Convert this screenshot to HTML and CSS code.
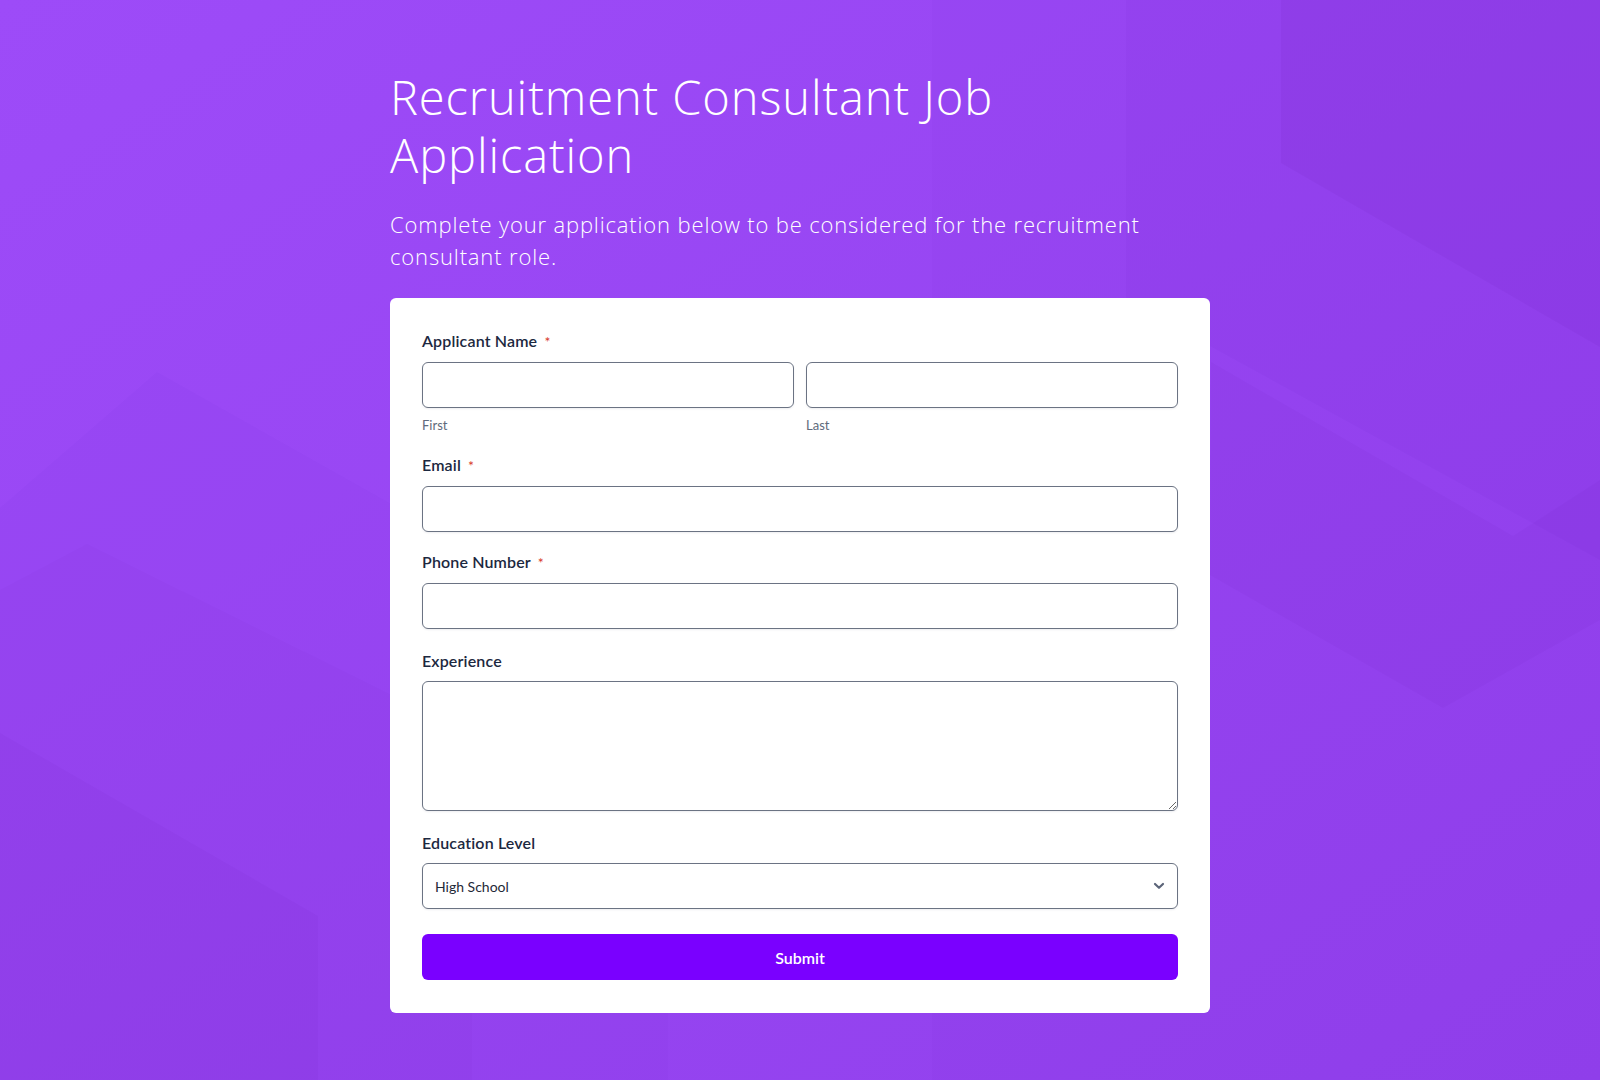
FILE: index.html
```html
<!DOCTYPE html>
<html lang="en">
<head>
<meta charset="utf-8">
<title>Recruitment Consultant Job Application</title>
<link rel="stylesheet" href="styles.css">
</head>
<body>
<svg class="bg" width="1600" height="1080" viewBox="0 0 1600 1080" preserveAspectRatio="none" aria-hidden="true">
  <defs>
    <linearGradient id="g" x1="0" y1="0" x2="1" y2="1">
      <stop offset="0" stop-color="#9d4bf8"/>
      <stop offset="1" stop-color="#9140ec"/>
    </linearGradient>
  </defs>
  <rect width="1600" height="1080" fill="url(#g)"/>
  <g fill="#4a0090">
    <polygon points="932,0 1600,0 1600,1080 932,1080" opacity="0.02"/>
    <polygon points="1126,0 1600,0 1600,560 1126,300" opacity="0.03"/>
    <polygon points="1281,0 1600,0 1600,347 1281,163" opacity="0.05"/>
    <polygon points="1211,362 1513,536 1600,480 1600,620 1443,708 1210,575" opacity="0.035"/>
    <polygon points="0,508 157,372 668,660 668,1080 0,1080" opacity="0.02"/>
    <polygon points="0,590 87,544 472,735 472,1080 0,1080" opacity="0.025"/>
    <polygon points="0,733 318,916 318,1080 0,1080" opacity="0.035"/>
  </g>
</svg>
<main class="page">
  <h1 class="title">Recruitment Consultant Job Application</h1>
  <p class="subtitle">Complete your application below to be considered for the recruitment consultant role.</p>
  <form class="card">
    <div class="field field-name">
      <label class="label">Applicant Name <span class="req">*</span></label>
      <div class="name-row">
        <div class="name-col">
          <input class="input" type="text">
          <span class="sublabel">First</span>
        </div>
        <div class="name-col">
          <input class="input" type="text">
          <span class="sublabel">Last</span>
        </div>
      </div>
    </div>
    <div class="field field-email">
      <label class="label">Email <span class="req">*</span></label>
      <input class="input" type="email">
    </div>
    <div class="field field-phone">
      <label class="label">Phone Number <span class="req">*</span></label>
      <input class="input" type="tel">
    </div>
    <div class="field">
      <label class="label">Experience</label>
      <textarea class="input textarea"></textarea>
    </div>
    <div class="field field-last">
      <label class="label">Education Level</label>
      <div class="select-wrap">
        <select class="input select">
          <option>High School</option>
          <option>Associate Degree</option>
          <option>Bachelor's Degree</option>
          <option>Master's Degree</option>
        </select>
        <svg class="chev" width="12" height="8" viewBox="0 0 12 8" aria-hidden="true"><path d="M2 2 L6 5.8 L10 2" fill="none" stroke="#5b6478" stroke-width="2.2" stroke-linecap="round" stroke-linejoin="round"/></svg>
      </div>
    </div>
    <button class="submit" type="button">Submit</button>
  </form>
</main>
</body>
</html>
```

FILE: styles.css
```css
* { box-sizing: border-box; }

html, body {
  margin: 0;
  padding: 0;
}

body {
  position: relative;
  width: 1600px;
  min-height: 1080px;
  overflow: hidden;
  background: #9746f3;
  font-family: "Lato", "Noto Sans", sans-serif;
}

.bg {
  position: absolute;
  left: 0;
  top: 0;
  z-index: 0;
}

.page {
  position: relative;
  z-index: 1;
  width: 820px;
  margin: 0 auto;
  padding-top: 68px;
}

.title {
  margin: 0;
  font-family: "Open Sans", "Noto Sans", sans-serif;
  font-weight: 300;
  font-size: 47px;
  line-height: 58px;
  color: #ffffff;
  letter-spacing: 0.9px;
}

.subtitle {
  margin: 24px 0 26px;
  font-family: "Open Sans", "Noto Sans", sans-serif;
  font-weight: 300;
  font-size: 22px;
  line-height: 32px;
  color: #ffffff;
  letter-spacing: 0.85px;
}

.card {
  background: #ffffff;
  border-radius: 6px;
  padding: 31px 32px 33px;
  display: flex;
  flex-direction: column;
}

.field {
  display: flex;
  flex-direction: column;
  margin-bottom: 20px;
}

.field-name { margin-bottom: 19px; }

.field-email { margin-bottom: 18px; }

.field-last { margin-bottom: 0; }

.label {
  font-size: 16px;
  line-height: 24px;
  font-weight: 600;
  color: #1c2840;
  margin-bottom: 8px;
  letter-spacing: 0.15px;
}

.req {
  color: #d8392b;
  font-size: 14px;
  font-weight: 400;
  margin-left: 3px;
}

.name-row {
  display: flex;
  gap: 12px;
}

.name-col {
  flex: 1;
  display: flex;
  flex-direction: column;
}

.sublabel {
  margin-top: 8px;
  font-size: 13px;
  line-height: 18px;
  color: #606a7c;
}

.input {
  display: block;
  width: 100%;
  height: 46px;
  border: 1px solid #6b7383;
  border-radius: 6px;
  background: #ffffff;
  box-shadow: 0 1px 2px rgba(20, 30, 60, 0.08);
  font-family: "Lato", "Noto Sans", sans-serif;
  font-size: 14px;
  color: #1f2937;
  padding: 0 12px;
  outline: none;
}

.textarea {
  height: 130px;
  padding: 10px 12px;
  resize: vertical;
}

.select-wrap {
  position: relative;
}

.select {
  appearance: none;
  -webkit-appearance: none;
  padding-left: 12px;
  padding-right: 36px;
  cursor: pointer;
}

.chev {
  position: absolute;
  right: 13px;
  top: 19px;
  pointer-events: none;
}

.submit {
  margin-top: 25px;
  height: 46px;
  width: 100%;
  border: none;
  border-radius: 6px;
  background: #7a00ff;
  color: #ffffff;
  font-family: "Lato", "Noto Sans", sans-serif;
  font-size: 16px;
  font-weight: 600;
  cursor: pointer;
}
```
